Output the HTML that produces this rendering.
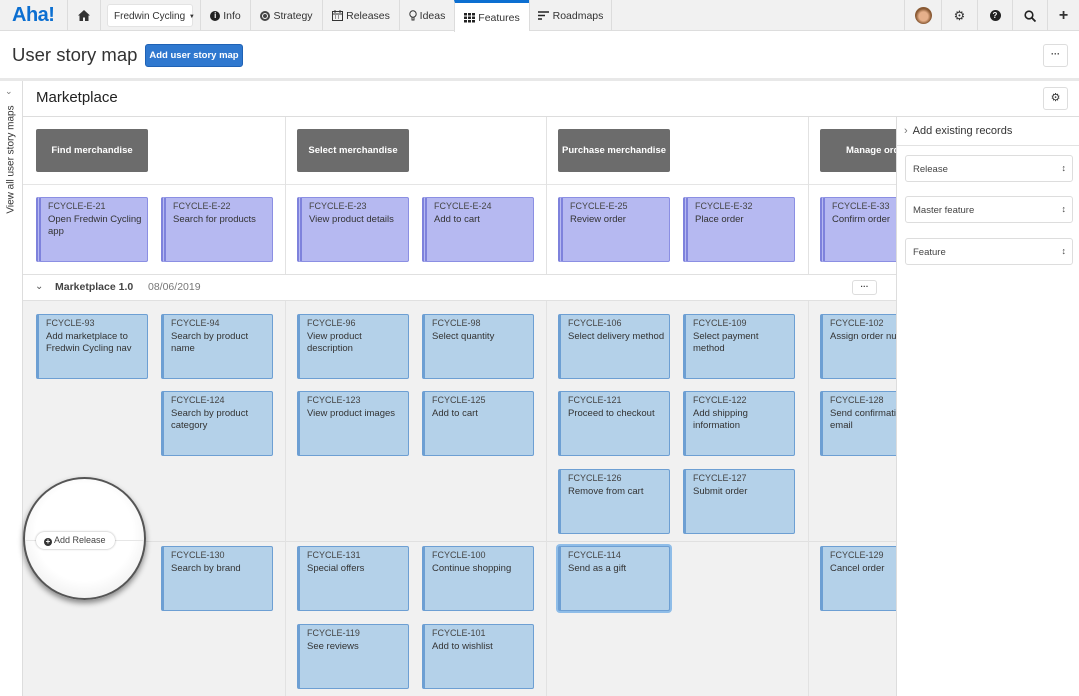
<!DOCTYPE html>
<html><head><meta charset="utf-8"><style>
*{box-sizing:border-box;margin:0;padding:0}
body{width:1079px;height:696px;overflow:hidden;font-family:"Liberation Sans",sans-serif;background:#fff;position:relative;color:#333}
.a{position:absolute}
.nav{left:0;top:0;width:1079px;height:31px;background:#f1f1f1;border-bottom:1px solid #ddd}
.ni{position:absolute;top:0;height:31px;border-left:1px solid #dcdcdc;font-size:10.5px;color:#333;display:flex;align-items:center;justify-content:center;gap:3px;white-space:nowrap}
.card{position:absolute;width:112px;height:65px;background:#b4d1e9;border:1px solid #6d9fd3;border-left:3px solid #6d9fd3;border-radius:2px;font-size:9.5px;padding:2px 8px 0 7px;color:#333;line-height:12px}
.card .id{color:#444;font-size:9px;margin-bottom:2px}
.ep{background:#b6b9f1;border:1px solid #8b8fe3;border-left:5px double #7e82dc;padding-right:2px}
.act{position:absolute;width:112px;height:43px;background:#6c6c6c;border-radius:2px;color:#fff;font-size:9.5px;font-weight:bold;display:flex;align-items:center;justify-content:center}
.vl{position:absolute;width:1px;background:#e2e2e2}
.sel{position:absolute;left:905px;width:168px;height:27px;border:1px solid #ddd;border-radius:3px;background:#fff;font-size:9.5px;padding:8px 0 0 7px;color:#444}
.sel:after{content:"\2195";position:absolute;right:6px;top:7px;font-size:9px}
</style></head><body>
<div class="a nav"></div>
<div class="a" style="left:12px;top:4px;font-size:20px;font-weight:bold;color:#0c6fd1;letter-spacing:-0.5px">Aha!</div>
<div class="ni" style="left:67px;width:33px"><svg width="12" height="11" viewBox="0 0 12 11"><path d="M6 0 0 5.5h1.5V11h3.5V7.5h2V11h3.5V5.5H12z" fill="#333"/></svg></div>
<div class="ni" style="left:100px;width:100px;border-left:1px solid #dcdcdc"></div>
<div class="a" style="left:107px;top:4px;width:86px;height:23px;background:#fff;border-radius:3px;border:1px solid #e3e3e3;font-size:10px;padding:6px 0 0 6px;white-space:nowrap">Fredwin Cycling <span style="font-size:6px;margin-left:1px;vertical-align:1px">▼</span></div>
<div class="ni" style="left:200px;width:50px"><span style="display:inline-block;width:10px;height:10px;border-radius:50%;background:#222;color:#fff;font-size:8px;font-weight:bold;text-align:center;line-height:10px">i</span>Info</div>
<div class="ni" style="left:250px;width:72px"><span style="display:inline-block;width:10px;height:10px;border-radius:50%;border:2px solid #444;box-shadow:inset 0 0 0 1px #fff,inset 0 0 0 3px #444"></span>Strategy</div>
<div class="ni" style="left:322px;width:77px"><svg width="11" height="11"><rect x="0.5" y="1.5" width="10" height="9" fill="none" stroke="#333"/><path d="M0 4h11M3 6h1M6 6h1M3 8h1M6 8h1M3 0v3M8 0v3" stroke="#333"/></svg>Releases</div>
<div class="ni" style="left:399px;width:55px"><svg width="8" height="12"><circle cx="4" cy="4" r="3.2" fill="none" stroke="#333"/><path d="M3 7v3h2V7" fill="none" stroke="#333"/></svg>Ideas</div>
<div class="ni" style="left:454px;width:75px;background:#fff;height:32px;border-top:3px solid #0c6fd1"><svg width="11" height="10"><g fill="#222"><rect x="0" y="0" width="3" height="2.5"/><rect x="4" y="0" width="3" height="2.5"/><rect x="8" y="0" width="3" height="2.5"/><rect x="0" y="3.5" width="3" height="2.5"/><rect x="4" y="3.5" width="3" height="2.5"/><rect x="8" y="3.5" width="3" height="2.5"/><rect x="0" y="7" width="3" height="2.5"/><rect x="4" y="7" width="3" height="2.5"/><rect x="8" y="7" width="3" height="2.5"/></g></svg>Features</div>
<div class="ni" style="left:529px;width:83px;border-right:1px solid #dcdcdc"><svg width="12" height="9"><path d="M0 1h11M0 4.5h7M0 8h4" stroke="#222" stroke-width="1.6"/></svg>Roadmaps</div>
<div class="ni" style="left:904px;width:37px"><span style="width:17px;height:17px;border-radius:50%;background:radial-gradient(circle at 50% 55%,#e6b08a 35%,#8a5a34 60%)"></span></div>
<div class="ni" style="left:941px;width:36px;font-size:13px">⚙</div>
<div class="ni" style="left:977px;width:35px"><span style="width:11px;height:11px;border-radius:50%;background:#222;color:#fff;font-size:8px;font-weight:bold;text-align:center;line-height:11px">?</span></div>
<div class="ni" style="left:1012px;width:35px"><svg width="12" height="12"><circle cx="5" cy="5" r="3.8" fill="none" stroke="#222" stroke-width="1.6"/><path d="M8 8l3.5 3.5" stroke="#222" stroke-width="1.8"/></svg></div>
<div class="ni" style="left:1047px;width:32px;font-size:16px;font-weight:bold">+</div>

<div class="a" style="left:12px;top:44px;font-size:18.5px;color:#333;white-space:nowrap">User story map</div>
<div class="a" style="left:145px;top:44px;width:98px;height:23px;background:#2f78cf;border:1px solid #1f62b5;border-radius:3px;color:#fff;font-size:9.5px;font-weight:bold;text-align:center;line-height:21px;white-space:nowrap">Add user story map</div>
<div class="a" style="left:1043px;top:44px;width:25px;height:23px;border:1px solid #ddd;border-radius:3px;text-align:center;font-size:9px;font-weight:bold;line-height:18px">···</div>
<div class="a" style="left:0;top:78px;width:1079px;height:3px;background:#e8e8e8"></div>

<div class="a" style="left:0;top:81px;width:23px;height:615px;background:#fff;border-right:1px solid #ddd"></div>
<div class="a" style="left:5px;top:86px;font-size:9px;color:#777">⌄</div>
<div class="a" style="left:-44px;top:154px;width:110px;transform:rotate(-90deg);font-size:10px;color:#333;white-space:nowrap;text-align:center">View all user story maps</div>

<div class="a" style="left:36px;top:89px;font-size:15px;color:#222">Marketplace</div>
<div class="a" style="left:1043px;top:87px;width:25px;height:23px;border:1px solid #ddd;border-radius:3px;text-align:center;font-size:11px;line-height:20px">⚙</div>
<div class="a" style="left:23px;top:116px;width:1056px;height:1px;background:#ddd"></div>

<div class="a" style="left:23px;top:117px;width:873px;height:157px;background:#fff"></div>
<div class="a" style="left:23px;top:184px;width:873px;height:1px;background:#e5e5e5"></div>
<div class="a" style="left:23px;top:274px;width:873px;height:27px;background:#fff;border-top:1px solid #e0e0e0;border-bottom:1px solid #e0e0e0"></div>
<div class="a" style="left:23px;top:301px;width:873px;height:395px;background:#f1f1f1"></div>
<div class="a" style="left:23px;top:541px;width:873px;height:1px;background:#e0e0e0"></div>
<div class="vl" style="left:285px;top:117px;height:157px"></div>
<div class="vl" style="left:546px;top:117px;height:157px"></div>
<div class="vl" style="left:808px;top:117px;height:157px"></div>
<div class="vl" style="left:285px;top:301px;height:395px"></div>
<div class="vl" style="left:546px;top:301px;height:395px"></div>
<div class="vl" style="left:808px;top:301px;height:395px"></div>

<div class="act" style="left:36px;top:129px">Find merchandise</div>
<div class="act" style="left:297px;top:129px">Select merchandise</div>
<div class="act" style="left:558px;top:129px">Purchase merchandise</div>
<div class="act" style="left:820px;top:129px;justify-content:flex-start;padding-left:26px;white-space:nowrap;overflow:hidden">Manage orders</div>

<div class="card ep" style="left:36px;top:197px"><div class="id">FCYCLE-E-21</div>Open Fredwin Cycling<br>app</div>
<div class="card ep" style="left:161px;top:197px"><div class="id">FCYCLE-E-22</div>Search for products</div>
<div class="card ep" style="left:297px;top:197px"><div class="id">FCYCLE-E-23</div>View product details</div>
<div class="card ep" style="left:422px;top:197px"><div class="id">FCYCLE-E-24</div>Add to cart</div>
<div class="card ep" style="left:558px;top:197px"><div class="id">FCYCLE-E-25</div>Review order</div>
<div class="card ep" style="left:683px;top:197px"><div class="id">FCYCLE-E-32</div>Place order</div>
<div class="card ep" style="left:820px;top:197px"><div class="id">FCYCLE-E-33</div>Confirm order</div>

<div class="a" style="left:35px;top:281px;font-size:10px;color:#555">⌄</div>
<div class="a" style="left:55px;top:281px;font-size:10.5px;font-weight:bold;color:#444">Marketplace 1.0</div>
<div class="a" style="left:148px;top:281px;font-size:10.5px;color:#777">08/06/2019</div>
<div class="a" style="left:852px;top:280px;width:25px;height:15px;border:1px solid #ddd;border-radius:3px;text-align:center;font-size:8px;font-weight:bold;line-height:11px;background:#fff">···</div>

<div class="card" style="left:36px;top:314px"><div class="id">FCYCLE-93</div>Add marketplace to Fredwin Cycling nav</div>
<div class="card" style="left:161px;top:314px"><div class="id">FCYCLE-94</div>Search by product name</div>
<div class="card" style="left:297px;top:314px"><div class="id">FCYCLE-96</div>View product description</div>
<div class="card" style="left:422px;top:314px"><div class="id">FCYCLE-98</div>Select quantity</div>
<div class="card" style="left:558px;top:314px;padding-right:2px"><div class="id">FCYCLE-106</div>Select delivery method</div>
<div class="card" style="left:683px;top:314px"><div class="id">FCYCLE-109</div>Select payment<br>method</div>
<div class="card" style="left:820px;top:314px;white-space:nowrap;overflow:hidden"><div class="id">FCYCLE-102</div>Assign order number</div>

<div class="card" style="left:161px;top:391px"><div class="id">FCYCLE-124</div>Search by product category</div>
<div class="card" style="left:297px;top:391px"><div class="id">FCYCLE-123</div>View product images</div>
<div class="card" style="left:422px;top:391px"><div class="id">FCYCLE-125</div>Add to cart</div>
<div class="card" style="left:558px;top:391px"><div class="id">FCYCLE-121</div>Proceed to checkout</div>
<div class="card" style="left:683px;top:391px"><div class="id">FCYCLE-122</div>Add shipping information</div>
<div class="card" style="left:820px;top:391px;white-space:nowrap;overflow:hidden"><div class="id">FCYCLE-128</div>Send confirmation<br>email</div>

<div class="card" style="left:558px;top:469px"><div class="id">FCYCLE-126</div>Remove from cart</div>
<div class="card" style="left:683px;top:469px"><div class="id">FCYCLE-127</div>Submit order</div>

<div class="card" style="left:161px;top:546px"><div class="id">FCYCLE-130</div>Search by brand</div>
<div class="card" style="left:297px;top:546px"><div class="id">FCYCLE-131</div>Special offers</div>
<div class="card" style="left:422px;top:546px"><div class="id">FCYCLE-100</div>Continue shopping</div>
<div class="card" style="left:558px;top:546px;box-shadow:0 0 0 2px #8fbde8"><div class="id">FCYCLE-114</div>Send as a gift</div>
<div class="card" style="left:820px;top:546px"><div class="id">FCYCLE-129</div>Cancel order</div>

<div class="card" style="left:297px;top:624px"><div class="id">FCYCLE-119</div>See reviews</div>
<div class="card" style="left:422px;top:624px"><div class="id">FCYCLE-101</div>Add to wishlist</div>

<div class="a" style="left:23px;top:477px;width:123px;height:123px;border-radius:50%;background:radial-gradient(circle at 50% 45%,#fff 55%,#f2f2f2 75%,#d8d8d8 100%);border:2px solid #555;box-shadow:0 3px 6px rgba(0,0,0,.45)"></div>
<div class="a" style="left:25px;top:540px;width:119px;height:1px;background:#e6e6e6"></div>
<div class="a" style="left:36px;top:532px;width:79px;height:17px;background:#fff;border-radius:9px;box-shadow:0 0 2px rgba(0,0,0,.35);font-size:9px;color:#444;padding:3px 0 0 8px;white-space:nowrap"><span style="display:inline-block;width:8px;height:8px;border-radius:50%;background:#333;color:#fff;font-size:8px;line-height:7px;text-align:center;vertical-align:-1px;font-weight:bold">+</span> Add Release</div>

<div class="a" style="left:896px;top:117px;width:183px;height:579px;background:#fff;border-left:1px solid #ddd"></div>
<div class="a" style="left:904px;top:125px;font-size:11px;color:#333"><span style="color:#777;margin-right:5px">›</span>Add existing records</div>
<div class="a" style="left:897px;top:145px;width:182px;height:1px;background:#e2e2e2"></div>
<div class="sel" style="top:155px">Release</div>
<div class="sel" style="top:196px">Master feature</div>
<div class="sel" style="top:238px">Feature</div>
</body></html>
